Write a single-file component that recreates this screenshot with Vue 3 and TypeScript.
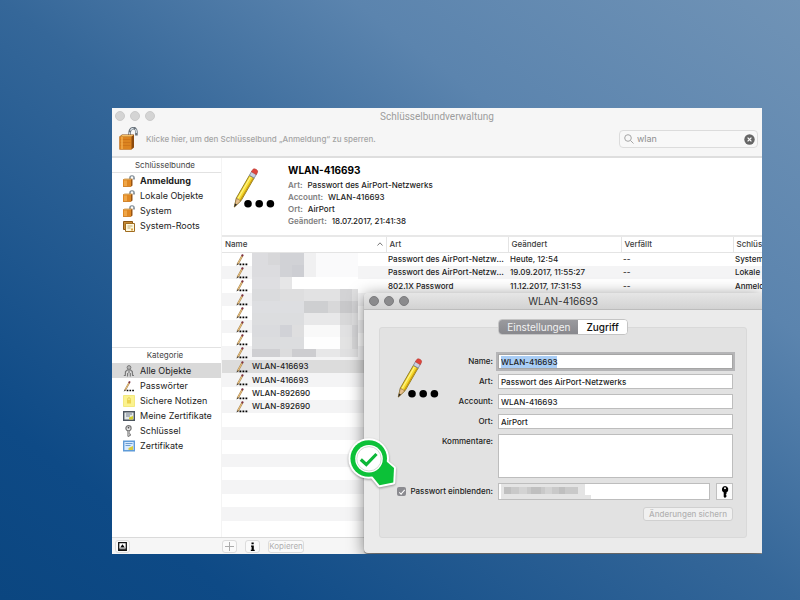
<script setup lang="ts">
import { onMounted, ref } from 'vue'

interface SideItem { label: string; icon: string }
interface KeyRow { name?: string; kind?: string; changed?: string; expires?: string; chain?: string }

const keychains: SideItem[] = [
  { label: 'Anmeldung', icon: 'smalllock' },
  { label: 'Lokale Objekte', icon: 'smalllock' },
  { label: 'System', icon: 'smalllock' },
  { label: 'System-Roots', icon: 'roots' },
]

const categories: SideItem[] = [
  { label: 'Alle Objekte', icon: 'keys' },
  { label: 'Passwörter', icon: 'smallpencil' },
  { label: 'Sichere Notizen', icon: 'note' },
  { label: 'Meine Zertifikate', icon: 'mycert' },
  { label: 'Schlüssel', icon: 'key' },
  { label: 'Zertifikate', icon: 'cert' },
]

const rows: KeyRow[] = [
  { kind: 'Passwort des AirPort-Netzwerks', changed: 'Heute, 12:54', expires: '--', chain: 'System' },
  { kind: 'Passwort des AirPort-Netzwerks', changed: '19.09.2017, 11:55:27', expires: '--', chain: 'Lokale Objekte' },
  { kind: '802.1X Password', changed: '11.12.2017, 17:31:53', expires: '--', chain: 'Anmeldung' },
  {}, {}, {}, {}, {},
  { name: 'WLAN-416693' },
  { name: 'WLAN-416693' },
  { name: 'WLAN-892690' },
  { name: 'WLAN-892690' },
]
const blankRows = 9

/* Mosaic over the redacted names: x, y, width, height, fill */
const mosaic: [number, number, number, number, string][] = [
  [0, 0, 28, 24, '#dcdcdf'], [28, 0, 24, 24, '#d1d2d6'], [52, 0, 12, 24, '#f0f0f1'], [64, 0, 42, 24, '#fafafb'],
  [16, 0, 12, 12, '#d7d7d9'], [40, 12, 12, 12, '#cdced3'],
  [0, 24, 28, 12, '#dedee1'], [28, 24, 12, 12, '#e6e6e7'], [40, 24, 66, 12, '#ffffff'],
  [0, 36, 28, 12, '#dadbdd'], [28, 36, 24, 12, '#dededf'], [52, 36, 36, 12, '#e2e2e3'], [88, 36, 12, 12, '#d3d3d5'], [100, 36, 6, 12, '#dfdfe0'],
  [0, 48, 52, 12, '#dddee1'], [52, 48, 24, 12, '#cecfd1'], [76, 48, 12, 12, '#d8d8d9'], [88, 48, 12, 12, '#c8c8ca'], [100, 48, 6, 12, '#d2d2d4'],
  [0, 60, 52, 12, '#dcdddf'], [52, 60, 36, 12, '#e8e8e9'], [88, 60, 12, 12, '#d8d8d9'], [100, 60, 6, 12, '#dededf'],
  [0, 72, 28, 12, '#dadbde'], [28, 72, 12, 12, '#d1d2d7'], [40, 72, 12, 12, '#dededf'], [52, 72, 36, 12, '#f9f9f9'], [88, 72, 12, 12, '#e1e1e2'], [100, 72, 6, 12, '#d5d5d7'],
  [0, 84, 52, 12, '#dcdddf'], [52, 84, 36, 12, '#fefefe'], [88, 84, 12, 12, '#e3e3e3'], [100, 84, 6, 12, '#d7d7d8'],
  [0, 96, 28, 8, '#cfcfd2'], [28, 96, 12, 8, '#dcdcdd'], [40, 96, 24, 8, '#cdcdd0'], [64, 96, 24, 8, '#e7e7e8'], [88, 96, 18, 8, '#e0e0e1'],
]

const search = ref('wlan')
const name = ref('WLAN-416693')
const kind = ref('Passwort des AirPort-Netzwerks')
const account = ref('WLAN-416693')
const place = ref('AirPort')
const comments = ref('')
const password = ref('')
const showPassword = ref(true)
const nameInput = ref<HTMLInputElement | null>(null)

onMounted(() => {
  nameInput.value?.focus()
  nameInput.value?.select()
})
</script>

<template>
  <div class="desktop">
    <svg class="defs" aria-hidden="true">
      <symbol id="pencil" viewBox="0 0 42 44">
        <g transform="translate(1.3 41) rotate(30)">
          <path d="M0 0 L-2.700 -9 V-35 H2.700 V-9Z" fill="#f7dc2e" stroke="#857021" stroke-width=".8" />
          <path d="M-1 -9 V-34" stroke="#fff48a" stroke-width="1.2" />
          <path d="M1.900 -9 V-34" stroke="#c99c13" stroke-width="1.2" />
          <path d="M0 0 L-2.7 -9 Q-1.4 -7.6 0 -9 Q1.4 -7.6 2.7 -9Z" fill="#e7c08d" stroke="#80633a" stroke-width=".5" />
          <path d="M0 0 L-1.1 -3.4 H1.1Z" fill="#222" />
          <path d="M-2.800 -35 H2.800 V-40 H-2.800Z" fill="#c9d0e0" stroke="#7c8294" stroke-width=".7" />
          <path d="M-2.800 -39 H2.800 V-41.500 Q2.800 -43.500 0 -43.500 Q-2.800 -43.500 -2.800 -41.500Z" fill="#e0463c" stroke="#b23a34" stroke-width=".5" />
        </g>
        <circle cx="15" cy="37.700" r="3.800" />
        <circle cx="26.200" cy="37.700" r="3.800" />
        <circle cx="37.400" cy="37.700" r="3.800" />
      </symbol>
      <symbol id="smallpencil" viewBox="0 0 12 13">
        <path d="M1.500 11.500 L6.300 2.800" stroke="#a58453" stroke-width="1.900" />
        <path d="M1.900 10.700 L6 3.300" stroke="#efc47c" stroke-width="1" />
        <path d="M6 3.200 L6.900 1.500" stroke="#7d3040" stroke-width="2" />
        <path d="M.9 12.200 L1.900 10.600" stroke="#333" stroke-width="1" />
        <path d="M3.500 10.500h1.800v1.800H3.500zM6.500 10.500h1.800v1.800H6.500zM9.500 10.500h1.800v1.800H9.500z" />
      </symbol>
      <symbol id="lock" viewBox="0 0 20 24">
        <path d="M11.500 9.500 V7 C11.500 -.2 18.400 -.6 18.400 4.800 V8.500" fill="none" stroke="#6a737b" stroke-width="2.600" />
        <path d="M11.500 9.500 V7 C11.500 .1 18.300 -.3 18.300 4.800 V8" fill="none" stroke="#d8e1e8" stroke-width="1.300" stroke-dasharray="4 2" />
        <path d="M1.500 9.500 L4 7.500 H16 V20.500 L13.500 22.500 H1.500Z" fill="#8c4a0d" />
        <path d="M1.500 9.500 H13.500 V22.500 H1.500Z" fill="#dc8420" />
        <path d="M2 9.500 L4.300 8 H15.500 L13.500 9.500Z" fill="#f6c268" />
        <path d="M2.500 12.500h10M2.500 15.500h10M2.500 18.500h10" stroke="#c87018" stroke-width=".7" />
        <path d="M4 10v12" stroke="#f5b252" stroke-width="1.400" />
      </symbol>
      <symbol id="smalllock" viewBox="0 0 12 12">
        <path d="M7 5 V3 C7 .2 11 .2 11 3 V4.500" fill="none" stroke="#6f7b84" stroke-width="1.500" />
        <path d="M7.300 2.500 C7.800 .8 10.300 .8 10.700 2.500" fill="none" stroke="#dbe3e9" stroke-width=".8" />
        <path d="M0 4.500 L1.500 3.700 H9.500 V10.500 L8 11.700 H0Z" fill="#9a5512" />
        <path d="M0 4.500 H8 V11.700 H0Z" fill="#df8824" />
        <path d="M1 5.500H4V11H1Z" fill="#efa648" />
        <path d="M0 4.600 L1.500 3.700 H9.500 L8 4.600Z" fill="#f7cf85" />
      </symbol>
      <symbol id="roots" viewBox="0 0 12 12">
        <path d="M0.500 1.500h9v8h-9z" fill="#c78a35" stroke="#8a5715" />
        <path d="M2.500 3.500h9v8h-9z" fill="#fdf8df" stroke="#a06c20" />
        <path d="M4.500 6h5M4.500 8h3" stroke="#c2ad78" />
        <path d="M8 8.500h2v2H8z" fill="#dba642" />
      </symbol>
      <symbol id="keys" viewBox="0 0 12 12">
        <circle cx="6" cy="2.500" r="1.900" fill="#b5b5b5" stroke="#777" />
        <path d="M5 4.500 L2.500 6.500 L2.300 10.500 L.8 10.500M6 4.500V8M7 4.500 L9.300 6.500 L9.600 10.500 L11 10.500M4.700 8 L4.500 11.500M7.300 8V11.500" fill="none" stroke="#7a7a7a" stroke-width="1.200" />
      </symbol>
      <symbol id="note" viewBox="0 0 12 12">
        <path d="M.5.5h11v11H.5z" fill="#fbf28e" stroke="#f3e87f" />
        <path d="M4 5h4v3.500H4z" fill="#ecd24e" />
        <path d="M4.700 5V4a1.300 1.300 0 0 1 2.600 0v1" fill="none" stroke="#e6d05c" />
      </symbol>
      <symbol id="mycert" viewBox="0 0 12 12">
        <path d="M.7 1.700h10.600v8.600H.7z" fill="#e4e8e6" stroke="#4c5560" stroke-width="1.400" />
        <path d="M3 4h6M3 6h4" stroke="#768091" />
        <path d="M6 7.500 L10 6 V9.600 H6Z" fill="#d3cf2c" />
      </symbol>
      <symbol id="key" viewBox="0 0 12 12">
        <circle cx="5.500" cy="3.300" r="2.600" fill="#ececec" stroke="#757575" stroke-width="1.200" />
        <circle cx="5.500" cy="2.700" r=".9" fill="#555" />
        <path d="M4.800 6v5.300L6 11.800V10.500H7.500V9H6.200V6" fill="#d0d0d0" stroke="#777" stroke-width=".8" />
      </symbol>
      <symbol id="cert" viewBox="0 0 12 12">
        <path d="M.7 1.200h10.600v9.600H.7z" fill="#d8eaff" stroke="#5f9bd8" stroke-width="1.400" />
        <path d="M2.500 3.500h7M2.500 5.500h5" stroke="#6b9dd0" />
        <path d="M5.500 8 L10 6 V10 H5.500Z" fill="#d9cc3c" />
      </symbol>
    </svg>

    <main class="window">
      <header class="top">
        <div class="titlebar">
          <span class="lights"><i></i><i></i><i></i></span>
          <h1>Schlüsselbundverwaltung</h1>
        </div>
        <div class="tools">
          <button class="unlock" type="button" aria-label="Schlüsselbund sperren">
            <svg><use href="#lock" /></svg>
          </button>
          <p>Klicke hier, um den Schlüsselbund „Anmeldung“ zu sperren.</p>
          <div class="search">
            <svg class="glass" viewBox="0 0 10 10"><circle cx="4" cy="4" r="3.300" /><path d="M6.500 6.500 L9.500 9.500" /></svg>
            <input v-model="search" type="text" aria-label="Suchen">
            <button type="button" aria-label="Suche löschen">
              <svg viewBox="0 0 11 11"><circle cx="5.500" cy="5.500" r="5.200" /><path d="M3.600 3.600l3.800 3.800M7.400 3.600L3.600 7.400" /></svg>
            </button>
          </div>
        </div>
      </header>

      <div class="body">
        <aside class="side">
          <section class="chains">
            <h2 class="ruled">Schlüsselbunde</h2>
            <ul>
              <li v-for="(item, i) in keychains" :key="item.label" :class="{ strong: i === 0 }">
                <svg><use :href="'#' + item.icon" /></svg>{{ item.label }}
              </li>
            </ul>
          </section>
          <section class="cats">
            <h2>Kategorie</h2>
            <ul>
              <li v-for="(item, i) in categories" :key="item.label" :class="{ picked: i === 0 }">
                <svg><use :href="'#' + item.icon" /></svg>{{ item.label }}
              </li>
            </ul>
          </section>
        </aside>

        <section class="content">
          <div class="detail">
            <svg class="pencil"><use href="#pencil" /></svg>
            <div>
              <h3>WLAN-416693</h3>
              <dl>
                <div><dt>Art:</dt><dd>Passwort des AirPort-Netzwerks</dd></div>
                <div><dt>Account:</dt><dd>WLAN-416693</dd></div>
                <div><dt>Ort:</dt><dd>AirPort</dd></div>
                <div><dt>Geändert:</dt><dd>18.07.2017, 21:41:38</dd></div>
              </dl>
            </div>
          </div>
          <div class="list">
            <table>
              <colgroup><col class="c1"><col class="c2"><col class="c3"><col class="c4"><col></colgroup>
              <thead>
                <tr>
                  <th><span class="sorted">Name<svg viewBox="0 0 6 4"><path d="M.5 3.500 L3 .8 L5.500 3.500" /></svg></span></th>
                  <th>Art</th><th>Geändert</th><th>Verfällt</th><th>Schlüsselbund</th>
                </tr>
              </thead>
              <tbody>
                <tr v-for="(row, i) in rows" :key="i" :class="{ picked: i === 8 }">
                  <td><span class="entry"><svg><use href="#smallpencil" /></svg>{{ row.name }}</span></td>
                  <td>{{ row.kind }}</td><td>{{ row.changed }}</td><td>{{ row.expires }}</td><td class="last">{{ row.chain }}</td>
                </tr>
                <tr v-for="n in blankRows" :key="'b' + n"><td colspan="5"></td></tr>
              </tbody>
            </table>
            <svg class="mosaic" viewBox="0 0 106 104" shape-rendering="crispEdges">
              <rect v-for="(m, i) in mosaic" :key="i" :x="m[0]" :y="m[1]" :width="m[2]" :height="m[3]" :fill="m[4]" />
            </svg>
          </div>
        </section>
      </div>

      <footer class="foot">
        <div class="footside">
          <button type="button" aria-label="Vorschau">
            <svg viewBox="0 0 9 9"><path d="M.7.700h7.600v7.600H.7z" fill="#fff" stroke="#111" stroke-width="1.300" /><path d="M4.500 2.300L6.800 5.500H2.200z" /><path d="M1 7.200h7" stroke="#111" stroke-width="1.200" /></svg>
          </button>
        </div>
        <button type="button" aria-label="Hinzufügen"><svg viewBox="0 0 9 9"><path d="M4.500 0v9M0 4.500h9" stroke="#aaa" /></svg></button>
        <button type="button" aria-label="Information"><svg viewBox="0 0 9 9"><path d="M3.500.5h2.200v1.800H3.500zM3 3.500h2.800v4.200h.9V9H2.800V7.700h.8V4.700H3z" /></svg></button>
        <button class="copy" type="button" disabled>Kopieren</button>
      </footer>

      <form class="dialog" @submit.prevent>
        <div class="dialogbar">
          <span class="lights"><i></i><i></i><i></i></span>
          <h2>WLAN-416693</h2>
        </div>
        <div class="dialogbody">
          <div class="tabs">
            <button class="on" type="button">Einstellungen</button>
            <button type="button">Zugriff</button>
          </div>
          <div class="group">
            <svg class="pencil"><use href="#pencil" /></svg>
            <label class="r1" for="f-name">Name:</label>
            <input id="f-name" ref="nameInput" v-model="name" class="r1" type="text">
            <label class="r2" for="f-kind">Art:</label>
            <input id="f-kind" v-model="kind" class="r2" type="text">
            <label class="r3" for="f-account">Account:</label>
            <input id="f-account" v-model="account" class="r3" type="text">
            <label class="r4" for="f-place">Ort:</label>
            <input id="f-place" v-model="place" class="r4" type="text">
            <label class="r5" for="f-comments">Kommentare:</label>
            <textarea id="f-comments" v-model="comments" class="r5"></textarea>
            <label class="reveal r6" for="f-show"><input id="f-show" v-model="showPassword" type="checkbox">Passwort einblenden:</label>
            <div class="secret r6">
              <div class="masked">
                <input v-model="password" type="text" aria-label="Passwort">
                <svg viewBox="0 0 92 15" shape-rendering="crispEdges">
                  <path d="M2 0h84v15H2z" fill="#e4e4e4" />
                  <path d="M86 11h6v4h-6z" fill="#e4e4e4" />
                  <path d="M5 3h74v7H5z" fill="#c9c9c9" />
                  <path d="M5 3h7v7H5zM32 3h10v7H32zM60 3h6v7h-6z" fill="#bfbfbf" />
                  <path d="M20 3h8v7h-8zM46 3h7v7h-7z" fill="#d3d3d3" />
                </svg>
              </div>
              <button type="button" aria-label="Passwortassistent">
                <svg viewBox="0 0 8 12"><path fill-rule="evenodd" d="M4 0a3.400 3.400 0 0 1 1.500 6.400V8l-.8.8.8.8v1L4 12l-1.300-1.200V6.400A3.400 3.400 0 0 1 4 0zM4 1.300a1 1 0 0 0 0 2 1 1 0 0 0 0-2z" /></svg>
              </button>
            </div>
            <button class="save r7" type="submit" disabled>Änderungen sichern</button>
          </div>
        </div>
        <svg class="badge" viewBox="0 0 50 52" aria-hidden="true">
          <g stroke="#fff" stroke-width="4" stroke-linejoin="round" fill="#fff" class="halo">
            <circle cx="20.700" cy="20.500" r="18.300" /><path d="M38.500 24 L46 30 L45.300 44.500 L31.500 47.300 L24 38Z" />
          </g>
          <circle cx="20.700" cy="20.500" r="18.300" fill="#0cc138" />
          <path d="M38 23 L46 30 L45.300 44.500 L31.500 47.300 L24 38Z" fill="#0cc138" />
          <circle cx="21" cy="20.800" r="13.800" fill="#fff" />
          <circle cx="21" cy="20.800" r="12.200" fill="none" stroke="#c5d3c8" stroke-width=".8" />
          <path d="M12.800 21.500 L18.300 26.500 L28.500 16" fill="none" stroke="#0cb838" stroke-width="3.200" />
        </svg>
      </form>
    </main>
  </div>
</template>

<style>
body { margin: 0; }
</style>

<style scoped>
* { box-sizing: border-box; }
h1, h2, h3, p, dl, dd, ul { margin: 0; padding: 0; }
button, input, textarea { font: inherit; color: inherit; margin: 0; }
svg { display: block; flex: none; }

.desktop {
  min-height: 100vh;
  display: flex;
  padding: 108px 38px 46px 112px;
  background: linear-gradient(to top right, #0b4680 0%, #0e4a86 15%, #356799 50%, #5b84ae 72%, #7093b6 100%);
  font: 8px/12px Inter, "Liberation Sans", sans-serif;
  color: #1c1c1c;
}
.defs { position: absolute; width: 0; height: 0; }

.window {
  position: relative;
  flex: 1;
  min-width: 0;
  display: flex;
  flex-direction: column;
  overflow: hidden;
  background: #fff;
}

.top { background: #f6f6f6; border-bottom: 2px solid #dedede; }
.titlebar { display: flex; justify-content: center; height: 17px; position: relative; }
.titlebar h1 { font: 400 10px/17px Roboto, "Liberation Sans", sans-serif; color: #9c9c9c; }
.lights { position: absolute; left: 3px; top: 3px; display: flex; gap: 5px; }
.lights i { width: 10px; height: 10px; border-radius: 50%; background: #d4d4d4; border: 1px solid #cbcbcb; }
.tools { display: flex; align-items: center; height: 31px; padding: 0 4px 3px 6px; gap: 8px; }
.tools p { flex: 1; color: #a4a4a4; font-weight: 500; }
.unlock { width: 20px; height: 24px; padding: 0; border: 0; background: none; }
.unlock svg { width: 20px; height: 24px; }
.search {
  display: flex;
  align-items: center;
  width: 139px;
  height: 18px;
  padding: 0 2px 0 4px;
  gap: 3px;
  border: 1px solid #dcdcdc;
  border-radius: 4px;
  background: #f8f8f8;
}
.search input { flex: 1; min-width: 0; padding: 0; border: 0; outline: 0; background: none; font-size: 9px; color: #8f8f8f; }
.search button { padding: 0; border: 0; background: none; }
.search button svg { width: 11px; height: 11px; fill: #666; stroke: #fff; stroke-width: 1.2; }
.search circle { stroke: none; }
.glass { width: 10px; height: 10px; fill: none; stroke: #a5a5a5; stroke-width: 1; }
.search .glass circle { stroke: #a5a5a5; }

.body { flex: 1; display: flex; }
.side { width: 109px; display: flex; flex-direction: column; }
.side h2 { font-size: 8px; line-height: 15px; font-weight: 400; text-align: center; color: #444; padding-right: 3px; }
.side h2.ruled { line-height: 14px; border-bottom: 1px solid #e2e2e2; }
.chains { height: 189px; }
.cats { flex: 1; border-top: 1px solid #e2e2e2; }
.side ul { list-style: none; }
.side li { display: flex; align-items: center; gap: 5px; height: 15px; padding-left: 11px; font-size: 9px; white-space: nowrap; }
.side li svg { width: 12px; height: 12px; }
.side li.strong { font-weight: 700; }
.side li.picked { background: #d9d9d9; }

.content { flex: 1; min-width: 0; border-left: 1px solid #f4f4f4; }
.detail { display: flex; gap: 13px; height: 79px; padding: 5px 0 0 11px; border-bottom: 2px solid #e8e8e8; }
.pencil { width: 42px; height: 44px; }
.detail .pencil { margin-top: 3px; }
.detail h3 { font-size: 10px; line-height: 14px; font-weight: 700; color: #000; }
.detail dl { margin-top: 2px; }
.detail dl > div { display: flex; gap: 5px; line-height: 12px; }
.detail dt { color: #7e7e7e; font-weight: 600; }
.detail dd { font-weight: 500; }

.list { position: relative; overflow: hidden; }
table { width: 100%; border-collapse: collapse; table-layout: fixed; }
.c1 { width: 164px; }
.c2 { width: 122px; }
.c3 { width: 113px; }
.c4 { width: 112px; }
th { height: 15px; padding: 0 0 0 3px; text-align: left; font-weight: 500; color: #3c3c3c; border-right: 1px solid #e4e4e4; border-bottom: 1px solid #e4e4e4; line-height: 14px; overflow: hidden; white-space: nowrap; }
th:last-child { border-right: 0; }
.sorted { display: flex; align-items: center; justify-content: space-between; padding-right: 3px; }
.sorted svg { width: 6px; height: 4px; fill: none; stroke: #777; stroke-width: 1; }
td { height: 13px; padding: 0 2px; line-height: 12px; font-weight: 500; overflow: hidden; white-space: nowrap; text-overflow: ellipsis; }
td.last { text-overflow: clip; }
tbody tr:nth-child(5n+3) td, tbody tr:nth-child(5n+5) td { height: 14px; }
tbody tr:nth-child(even) { background: #f4f4f5; }
tbody tr.picked { background: #dcdcdc; }
.entry { display: flex; align-items: center; gap: 4px; padding-left: 12px; }
.entry svg { width: 12px; height: 13px; }
.mosaic { position: absolute; left: 30px; top: 16px; width: 106px; height: 104px; }

.foot { display: flex; align-items: center; gap: 8px; height: 17px; border-top: 1px solid #dadada; background: #f6f6f6; }
.footside { width: 102px; padding-left: 3px; }
.foot button { width: 15px; height: 13px; padding: 0; display: grid; place-items: center; border: 1px solid #dcdcdc; border-radius: 3px; background: #fafafa; }
.foot button svg { width: 9px; height: 9px; }
.foot .copy { width: 36px; line-height: 11px; color: #b0b0b0; }

.dialog {
  position: absolute;
  left: 252px;
  right: 0;
  top: 185px;
  bottom: 1px;
  display: flex;
  flex-direction: column;
  border-radius: 4px 0 0 4px;
  background: #ebebeb;
  box-shadow: 0 1px 1px rgba(0, 0, 0, .45), 0 3px 16px rgba(0, 0, 0, .5);
}
.dialogbar { position: relative; height: 17px; border-radius: 4px 0 0; border-bottom: 1px solid #bcbcbc; background: linear-gradient(#e6e6e6, #d2d2d2); }
.dialogbar h2 { font-size: 10px; line-height: 17px; font-weight: 400; text-align: center; color: #333; }
.dialogbar .lights { left: 5px; }
.dialogbar .lights i { background: #8b8b8d; border-color: #7c7c7e; }
.dialogbody { flex: 1; display: flex; flex-direction: column; padding: 9px 15px 15px; }
.tabs { position: relative; display: flex; align-self: center; height: 16px; margin-bottom: -8px; border-radius: 4px; overflow: hidden; border: 1px solid #c4c4c4; background: #fff; }
.tabs button { padding: 0 8px; border: 0; background: #fff; font-size: 10px; line-height: 14px; font-weight: 500; color: #111; }
.tabs .on { background: linear-gradient(#9a9a9e, #88888d); color: #f2f2f2; font-weight: 400; }
.group {
  flex: 1;
  display: grid;
  grid-template-columns: 113px 1fr;
  grid-template-rows: repeat(4, 15px) 44px 17px 14px;
  gap: 5px;
  align-content: start;
  padding: 26px 13px 0 0;
  border: 1px solid #d9d9d9;
  border-radius: 3px;
  background: #e2e2e2;
}
.r1 { grid-row: 1; }
.r2 { grid-row: 2; }
.r3 { grid-row: 3; }
.r4 { grid-row: 4; }
.r5 { grid-row: 5; }
.r6 { grid-row: 6; }
.r7 { grid-row: 7; }
.group > .pencil { grid-column: 1; grid-row: 1 / 4; margin: 2px 0 0 17px; }
.group label { grid-column: 1; justify-self: end; font-weight: 500; line-height: 15px; white-space: nowrap; }
.group > input, .group > textarea, .secret { grid-column: 2; }
.group input[type="text"], .group textarea {
  width: 100%;
  min-width: 0;
  padding: 0 2px;
  border: 1px solid #bdbdbd;
  border-radius: 0;
  background: #fff;
  font-weight: 500;
  outline: 0;
  resize: none;
}
.group #f-name { border-color: #a5a5a5; box-shadow: 0 0 0 2px #b5b5b7; }
#f-name::selection { background: #a9cdf5; color: #1c1c1c; }
.group .reveal { display: flex; align-items: center; gap: 4px; line-height: 17px; }
.reveal input { appearance: none; display: grid; place-items: center; width: 9px; height: 9px; border-radius: 2px; background: #8b8b90; }
.reveal input:checked::after { content: ""; width: 5px; height: 2px; border: solid #fff; border-width: 0 0 1px 1px; transform: rotate(-48deg); }
.secret { display: flex; gap: 6px; }
.masked { position: relative; flex: 1; display: flex; }
.masked svg { position: absolute; left: 1px; top: 1px; width: 92px; height: 15px; }
.secret button { width: 17px; padding: 0; display: grid; place-items: center; border: 1px solid #c0c0c0; background: #fbfbfb; }
.secret button svg { width: 8px; height: 12px; }
.save { grid-column: 2; justify-self: end; height: 14px; margin-top: 2px; padding: 0 5px; line-height: 12px; font-weight: 500; border: 1px solid #d0d0d0; border-radius: 3px; background: #f0f0f0; }
.group .save { color: #b2b2b2; }
.badge { position: absolute; left: -16px; top: 145px; width: 50px; height: 52px; overflow: visible; }
.halo { filter: drop-shadow(0 1px 1px rgba(0, 0, 0, .35)); }
</style>
